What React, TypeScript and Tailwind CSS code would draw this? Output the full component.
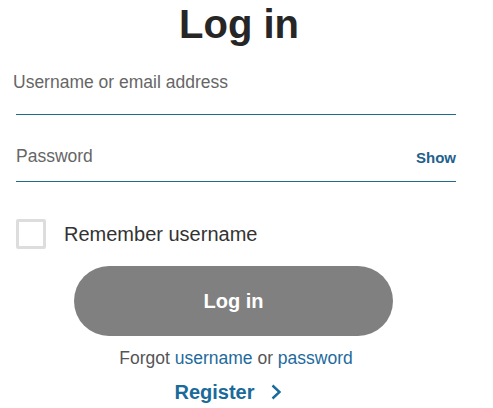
export default function App() {
  return (
    <div
      className="w-[493px] h-[408px] overflow-hidden bg-white"
      style={{ fontFamily: '"Liberation Sans", Arial, sans-serif' }}
    >
      <div className="ml-4 w-[440px] flex flex-col">
        {/* Title */}
        <h1 className="text-[40px] leading-[48px] font-bold text-center text-[#262626] ml-[6px]">
          Log in
        </h1>

        {/* Username */}
        <div className="mt-[24px] pb-[22px] border-b border-[#1f6b8a]">
          <div className="-ml-[3px] text-[17.5px] leading-[20px] text-[#666666]">
            Username or email address
          </div>
        </div>

        {/* Password */}
        <div className="mt-[31px] pb-[14px] border-b border-[#1f6b8a] flex items-baseline justify-between">
          <div className="text-[17.5px] leading-[20px] text-[#666666]">Password</div>
          <button className="text-[15px] leading-[20px] font-bold text-[#22618c] translate-y-[1px]">
            Show
          </button>
        </div>

        {/* Remember */}
        <div className="mt-[37px] flex items-center gap-[18px]">
          <div className="w-[30px] h-[30px] border-[3px] border-[#dddddd] rounded-[2px]" />
          <span className="text-[20px] leading-[24px] text-[#333333]">Remember username</span>
        </div>

        {/* Submit */}
        <button className="mt-[17px] ml-[58px] w-[319px] h-[70px] rounded-full bg-[#808080] text-white text-[20px] font-bold">
          Log in
        </button>

        {/* Forgot */}
        <div className="mt-[12px] text-center text-[17.5px] leading-[20px] text-[#555555]">
          Forgot <span className="text-[#1e6a9c]">username</span> or{" "}
          <span className="text-[#1e6a9c]">password</span>
        </div>

        {/* Register */}
        <div className="mt-[12px] flex items-center justify-center gap-[15px] pr-[16px]">
          <span className="text-[20px] leading-[24px] font-bold text-[#1a6a9a]">Register</span>
          <svg width="12" height="16" viewBox="0 0 12 16" fill="none" className="text-[#1a6a9a]">
            <path d="M2.5 1.5 L9.5 8 L2.5 14.5" stroke="currentColor" strokeWidth="2.4" />
          </svg>
        </div>
      </div>
    </div>
  );
}
